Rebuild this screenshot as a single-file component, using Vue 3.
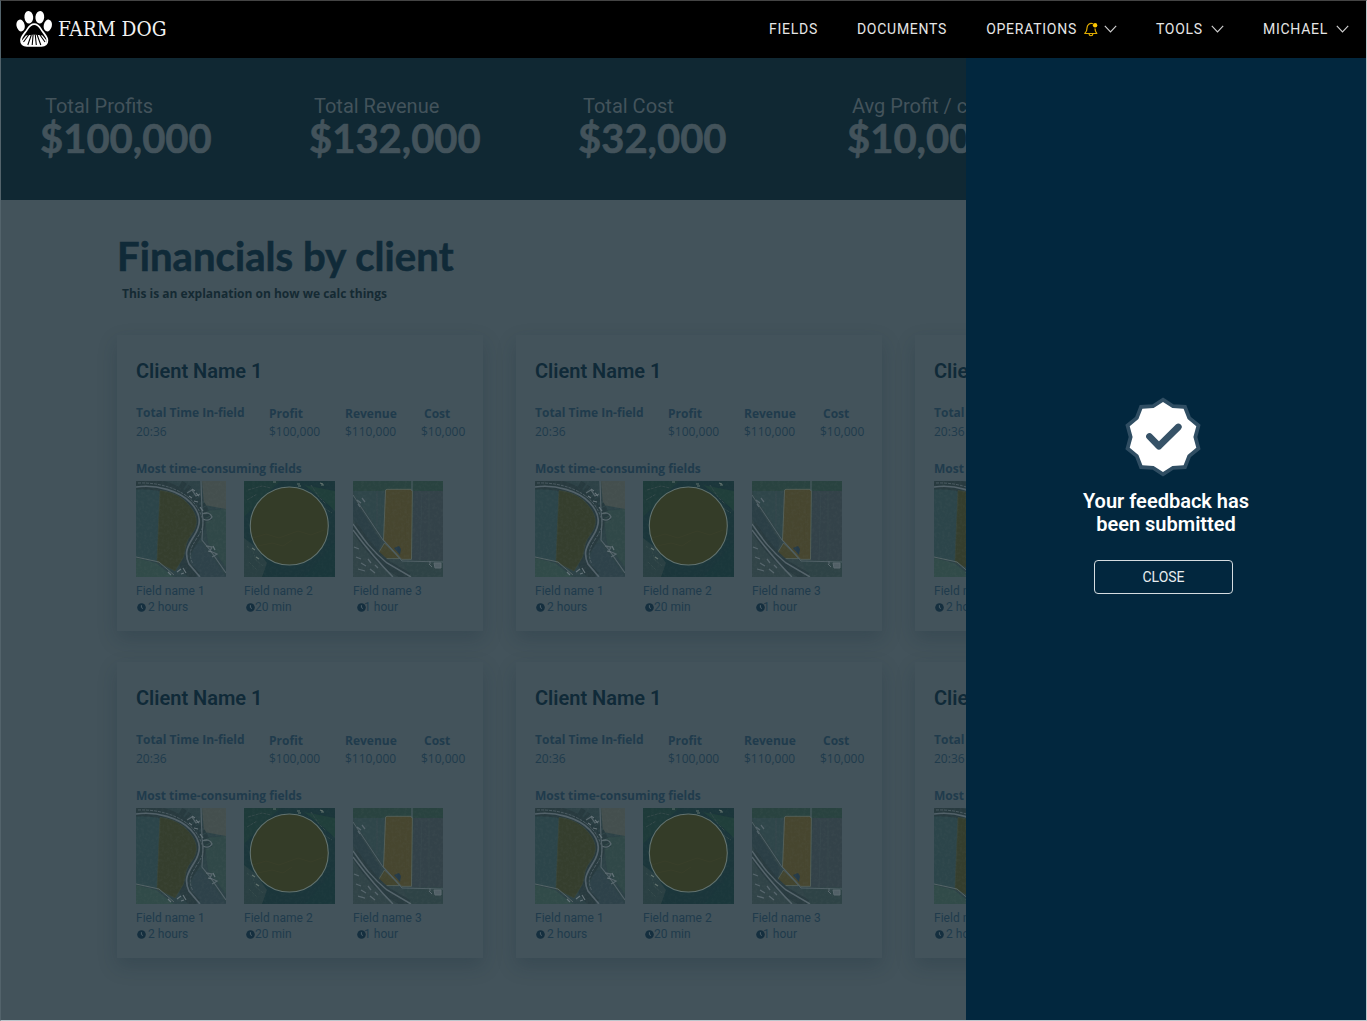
<script setup>
const totals = [
  { label: 'Total Profits', value: '$100,000' },
  { label: 'Total Revenue', value: '$132,000' },
  { label: 'Total Cost', value: '$32,000' },
  { label: 'Avg Profit / client', value: '$10,000' },
]

const stats = [
  { key: 'time', label: 'Total Time In-field', value: '20:36' },
  { key: 'profit', label: 'Profit', value: '$100,000' },
  { key: 'revenue', label: 'Revenue', value: '$110,000' },
  { key: 'cost', label: 'Cost', value: '$10,000' },
]

const fields = [
  { id: 1, name: 'Field name 1', time: '2 hours' },
  { id: 2, name: 'Field name 2', time: '20 min' },
  { id: 3, name: 'Field name 3', time: '1 hour' },
]

const nav = [
  { label: 'FIELDS' },
  { label: 'DOCUMENTS' },
  { label: 'OPERATIONS', bell: true, menu: true },
  { label: 'TOOLS', menu: true },
  { label: 'MICHAEL', menu: true },
]
</script>

<template>
  <div class="page">
    <!-- Shared aerial thumbnails -->
    <svg class="defs" width="0" height="0" aria-hidden="true">
      <filter id="grain" x="0" y="0" width="100%" height="100%" color-interpolation-filters="sRGB">
        <feTurbulence type="fractalNoise" baseFrequency="0.35" numOctaves="3" seed="4" />
        <feColorMatrix values="0 0 0 0 .42  0 0 0 0 .46  0 0 0 0 .46  1.6 0 0 0 -.65" />
      </filter>
      <symbol id="field-1" viewBox="0 0 90 96">
        <rect width="90" height="96" fill="#2d4247" />
        <path d="M0 8 24 9 21 81 0 76Z" fill="#2c454a" />
        <path d="M66 0H90V28L68 24Z" fill="#444f4e" />
        <path d="M68 30 90 28V86L72 62Z" fill="#304848" />
        <path d="M58 64 66 62 90 95V96H62L54 82Z" fill="#2e424a" />
        <path d="M0 77 20 82 38 96H0Z" fill="#314b49" />
        <path d="M0 3C30 1 52 14 61 30S56 58 50 70 52 88 60 96" fill="none" stroke="#283a3f" stroke-width="11" />
        <path d="M44 4C60 12 66 24 72 40" fill="none" stroke="#273a3f" stroke-width="9" stroke-dasharray="5 2 3 1" />
        <path d="M24 9.5C40 11 50 19 56 28S62 45 55 54 50 70 47 77L39 90 21 81Z" fill="#353e2d" stroke="#3d483b" stroke-width=".6" />
        <path d="M0 6C20 3 44 10 55 22S65 44 58 55 48 72 53 83L64 96" fill="none" stroke="#53626a" stroke-width="1.7" />
        <path d="M2 2C28 1 52 11 61 26S68 46 61 57 52 73 57 83" fill="none" stroke="#4a5a61" stroke-width="1" stroke-dasharray="3 1" />
        <path d="M65 0 66 30 67 39 66 59 74 69 90 92" fill="none" stroke="#526168" stroke-width="1.2" />
        <path d="M0 76 14 79 23 81 38 94" fill="none" stroke="#556466" stroke-width="1" />
        <path d="M66 33q8-3 10 3-3 5-9 2M51 12l5-3 4 6 4-2M70 65l6 1-2 4 7 3-5 3" fill="none" stroke="#58676d" stroke-width="1.3" />
        <path d="M56 8l3 2M60 12l3 3M53 15l3 2M58 20l4 1M64 26l3 4M72 70l4 1M77 65l2 4M41 91l4-3M47 87l3 5M32 91l3 3M45 93l3-1" stroke="#66747a" stroke-width="1.2" />
        <rect width="90" height="96" filter="url(#grain)" opacity=".13" />
      </symbol>
      <symbol id="field-2" viewBox="0 0 91 96">
        <rect width="91" height="96" fill="#1b363b" />
        <path d="M0 0H36L0 36Z" fill="#1e3b3a" />
        <path d="M0 57 12 66 23 82 18 96H0Z" fill="#2a4043" />
        <path d="M60 4 91 10V30L78 18Z" fill="#203f3b" />
        <path d="M91 60 66 90 60 96H91Z" fill="#1a373b" />
        <path d="M4 9 18 5 27 7M3 19 13 13M67 4l8 12 7 7M80 27l8 5M3 65l6 5 3 9 7 6M5 81l8 8" fill="none" stroke="#34494a" stroke-width="1" stroke-dasharray="3 1" />
        <path d="M53 3h3M54 5h3M76 2l3 1M77 4h3M29 1h3M8 67l3 2M12 76l3 2" stroke="#63736f" stroke-width="1.2" />
        <rect width="91" height="96" filter="url(#grain)" opacity=".08" />
        <circle cx="45.3" cy="45" r="39" fill="#343c28" stroke="#62726e" stroke-width="1.1" />
        <path d="M9 57 22 53 35 57 54 50 67 54 80 49M14 65 28 62 39 65 48 59" fill="none" stroke="#393f2a" stroke-width="1" />
      </symbol>
      <symbol id="field-3" viewBox="0 0 90 96">
        <rect width="90" height="96" fill="#314448" />
        <path d="M0 0H90V10H0Z" fill="#294340" />
        <path d="M0 10H31V58L2 15Z" fill="#2f464a" />
        <path d="M0 16 28 60 25 72 34 80 50 94 30 82 0 38Z" fill="#2b3f46" />
        <path d="M61 10H90V79H59Z" fill="#334249" />
        <path d="M50 80H90V96H57Z" fill="#2e4346" />
        <path d="M69 11 67 79M76 10V80M24 10V45" fill="none" stroke="#37474d" stroke-width="1" />
        <path d="M34 8.3H58L59.4 10 58.5 78.3H48.5L30.5 59 32.6 9Z" fill="#47462f" stroke="#596660" stroke-width=".8" />
        <path d="M31.5 62 47 77.5H30.5L26 71Z" fill="#43452f" stroke="#596660" stroke-width=".7" />
        <path d="M40 9 38 65M48 9 46 74M54 9 53 77" fill="none" stroke="#494831" stroke-width=".8" />
        <path d="M41 67 46 65 48 68 47 74Z" fill="#253b49" />
        <path d="M0 14 30 59 49 80 90 81M59 0V10" fill="none" stroke="#516167" stroke-width="1" />
        <path d="M0 44C10 58 16 69 34 84L55 96" fill="none" stroke="#293b40" stroke-width="9" />
        <path d="M0 43C10 57 16 67 34 82L58 96M0 49C12 65 24 80 40 96" fill="none" stroke="#55646b" stroke-width="1.500" />
        <path d="M4 19l4 3M9 17l3 4M5 23l2 3M3 76l5 2M8 82l5 3M15 78l3 4M5 88l7 2M17 88l5 4M22 84l3 3M1 66l5 2" stroke="#57666d" stroke-width="1.300" />
        <path d="M76 83l3 3M77 80v3M81 82h7v5h-6z" stroke="#5c6a70" stroke-width="1" fill="#526067" />
        <rect width="90" height="96" filter="url(#grain)" opacity=".12" />
      </symbol>
    </svg>

    <header class="topbar">
      <svg class="logo" width="160" height="38" viewBox="0 0 160 38">
        <g fill="#fff">
          <ellipse cx="4.6" cy="15.5" rx="4.1" ry="6" transform="rotate(-12 4.6 15.5)" />
          <ellipse cx="12.8" cy="7.2" rx="4.4" ry="6.3" transform="rotate(-5 12.8 7.2)" />
          <ellipse cx="23.8" cy="7.2" rx="4.4" ry="6.3" transform="rotate(5 23.8 7.2)" />
          <ellipse cx="31.8" cy="15.5" rx="4.1" ry="6" transform="rotate(12 31.8 15.5)" />
        </g>
        <path d="M18.2 14.2c-4.6 0-6 4-8.4 7.4-2.4 3.3-4.8 5.2-4.8 9 0 3.5 2.7 5.2 6 5.2h14.4c3.3 0 6-1.700 6-5.200 0-3.800-2.400-5.700-4.800-9-2.400-3.400-3.800-7.400-8.400-7.400z" fill="none" stroke="#fff" stroke-width="1.7" />
        <path d="M10 25.500Q18 24 26.500 25.500L30.500 30.500Q31 35.800 26 35.800H10.500Q5.200 35.800 6 30.500Z" fill="#fff" />
        <path d="M12.600 25 7.500 32M15.300 25 11.800 35M17.100 25 16.200 35M19.300 25 20.300 35M21.200 25 24.800 35M24 25 29 32" stroke="#000" stroke-width="1.100" />
        <text x="42" y="25.700" textLength="108.500" lengthAdjust="spacingAndGlyphs">FARM DOG</text>
      </svg>
      <nav class="nav">
        <a v-for="item in nav" :key="item.label" class="nav-item">
          <span>{{ item.label }}</span>
          <svg v-if="item.bell" class="bell" width="14" height="15" viewBox="0 0 14 15">
            <path d="M9 1.700C5.700.7 3.100 2.600 3.100 5.600 3.100 8.800 2.400 9.900.8 11.500H12.800C11.400 10 11 9 11 6.600M5 11.800c.2 2.600 3.700 2.600 3.900 0" fill="none" stroke="#e0ac00" stroke-width="1.200" stroke-linejoin="round" />
            <circle cx="11.100" cy="3.200" r="2.200" fill="#ffc800" />
          </svg>
          <svg v-if="item.menu" class="chevron" width="13" height="8" viewBox="0 0 13 8">
            <path d="M.8.900 6.500 6.800 12.200.900" fill="none" stroke="#d0d0d0" stroke-width="1.150" />
          </svg>
        </a>
      </nav>
    </header>

    <section class="totals">
      <div v-for="t in totals" :key="t.label" class="total">
        <div class="total-label">{{ t.label }}</div>
        <div class="total-value">{{ t.value }}</div>
      </div>
    </section>

    <main class="content">
      <h1>Financials by client</h1>
      <p class="explain">This is an explanation on how we calc things</p>
      <div class="cards">
        <article v-for="n in 6" :key="n" class="card">
          <h2>Client Name 1</h2>
          <div class="stats">
            <div v-for="s in stats" :key="s.key" class="stat" :class="s.key">
              <div class="stat-label">{{ s.label }}</div>
              <div class="stat-value">{{ s.value }}</div>
            </div>
          </div>
          <h3>Most time-consuming fields</h3>
          <div class="fields">
            <div v-for="f in fields" :key="f.id" class="field" :class="'field-' + f.id">
              <svg class="photo" height="96"><use :href="'#field-' + f.id" width="100%" height="96" /></svg>
              <div class="field-name">{{ f.name }}</div>
              <div class="field-time">
                <svg class="clock" width="9" height="9" viewBox="0 0 9 9">
                  <circle cx="4.500" cy="4.500" r="4.300" fill="#152f3f" />
                  <path d="M4.400 2.200V4.700L6 5.500" fill="none" stroke="#4c5e68" stroke-width="1" />
                </svg>
                <span>{{ f.time }}</span>
              </div>
            </div>
          </div>
        </article>
      </div>
    </main>

    <aside class="panel">
      <svg class="badge" width="80" height="80" viewBox="-40 -40 80 80">
        <path d="M0-35 9.400-28.900 20.600-28.300 24.600-17.900 33.300-10.800 30.400 0 33.300 10.800 24.600 17.900 20.600 28.300 9.400 28.900 0 35-9.400 28.900-20.600 28.300-24.600 17.900-33.300 10.800-30.400 0-33.300-10.800-24.600-17.900-20.600-28.300-9.400-28.900Z" fill="#fff" stroke="#304e63" stroke-width="7.600" paint-order="stroke" />
        <path d="M-13.500-.5-4.100 9.200 15.300-10" fill="none" stroke="#365267" stroke-width="6.800" stroke-linecap="round" stroke-linejoin="round" />
      </svg>
      <p class="message">Your feedback has<br />been submitted</p>
      <button class="close" type="button">CLOSE</button>
    </aside>
  </div>
</template>

<style>
body {
  margin: 0;
  overflow: hidden;
}
</style>

<style scoped>
.page {
  position: relative;
  box-sizing: border-box;
  width: 1367px;
  height: 1021px;
  overflow: hidden;
  border: 1px solid #bcc6cc;
  border-top-color: #444;
  border-left-color: #53636b;
  background: #43535b;
  font-family: Roboto, sans-serif;
}
.defs {
  position: absolute;
}
.topbar {
  display: flex;
  justify-content: space-between;
  align-items: center;
  box-sizing: border-box;
  height: 57px;
  padding: 0 17px 1px 15px;
  background: #000;
}
.logo text {
  font-family: "DejaVu Serif", serif;
  font-size: 20.500px;
  fill: #f2f2f2;
}
.nav {
  display: flex;
  gap: 39px;
}
.nav-item {
  display: flex;
  align-items: center;
  color: #e6e6e6;
  font-size: 14px;
  line-height: 20px;
  letter-spacing: 0.740px;
}
.bell {
  margin-left: 7px;
}
.chevron {
  margin-left: 8px;
}
.bell + .chevron {
  margin-left: 6px;
}
.totals {
  display: flex;
  box-sizing: border-box;
  height: 142px;
  padding: 36px 0 0 39px;
  background: #102833;
  color: #43535b;
}
.total {
  flex: 0 0 269px;
  white-space: nowrap;
}
.total-label {
  padding-left: 5px;
  font-size: 20px;
  line-height: 24px;
}
.total-value {
  font: bold 40px/40px Lato, sans-serif;
  -webkit-text-stroke: 0.600px #43535b;
}
.content {
  padding: 32px 0 0 116px;
}
h1 {
  margin: 0;
  color: #102a38;
  font: bold 40px/48px Lato, sans-serif;
  letter-spacing: 0.080px;
  -webkit-text-stroke: 0.600px #102a38;
}
.explain {
  margin: 5px 0 0 5px;
  color: #152a33;
  font: bold 12px/18px "Open Sans", sans-serif;
}
.cards {
  display: grid;
  grid-template-columns: repeat(3, 366px);
  gap: 31px 33px;
  margin-top: 32px;
}
.card {
  box-sizing: border-box;
  height: 296px;
  padding: 24px 0 0 19px;
  background: #43535b;
  box-shadow: 0 8px 18px rgba(16, 40, 55, 0.220);
  color: #203b4c;
}
h2 {
  margin: 0;
  color: #102a38;
  font-size: 20px;
  font-weight: 600;
  line-height: 24px;
}
.stats {
  display: flex;
  margin-top: 21px;
  font: 12px/18px "Open Sans", sans-serif;
}
.stat {
  flex: 0 0 76px;
}
.stat.time {
  flex-basis: 133px;
}
.stat.cost {
  flex-basis: 50px;
}
.stat-label {
  height: 19px;
  font-weight: bold;
}
.stat:not(.time) .stat-label {
  padding-top: 1px;
  height: 18px;
}
.cost .stat-label {
  padding-left: 3px;
}
h3 {
  margin: 19px 0 3px;
  font: bold 12px/18px "Open Sans", sans-serif;
}
.fields {
  display: flex;
  gap: 18px;
}
.field {
  width: 90px;
  font-size: 12px;
  line-height: 16px;
  letter-spacing: 0.030px;
}
.field-2 {
  width: 91px;
}
.photo {
  display: block;
  width: 100%;
  margin-bottom: 6px;
}
.field-time {
  display: flex;
  align-items: center;
}
.clock {
  margin: 0 2px 0 1px;
}
.field-2 .clock {
  margin: 0 0 0 2px;
}
.field-3 .clock {
  margin: 0 -2px 0 4px;
}
.panel {
  position: absolute;
  top: 57px;
  right: 0;
  bottom: 0;
  display: flex;
  flex-direction: column;
  align-items: center;
  box-sizing: border-box;
  width: 400px;
  padding-top: 339px;
  background: #02273e;
}
.badge {
  margin-right: 6px;
}
.message {
  margin: 13px 0 24px;
  color: #fff;
  font-size: 20px;
  font-weight: 600;
  line-height: 23px;
  text-align: center;
}
.close {
  width: 139px;
  height: 34px;
  margin-right: 5px;
  padding: 0;
  border: 1px solid #d5dce0;
  border-radius: 4px;
  background: none;
  color: #e8edf0;
  font: 14px Roboto, sans-serif;
}
</style>
